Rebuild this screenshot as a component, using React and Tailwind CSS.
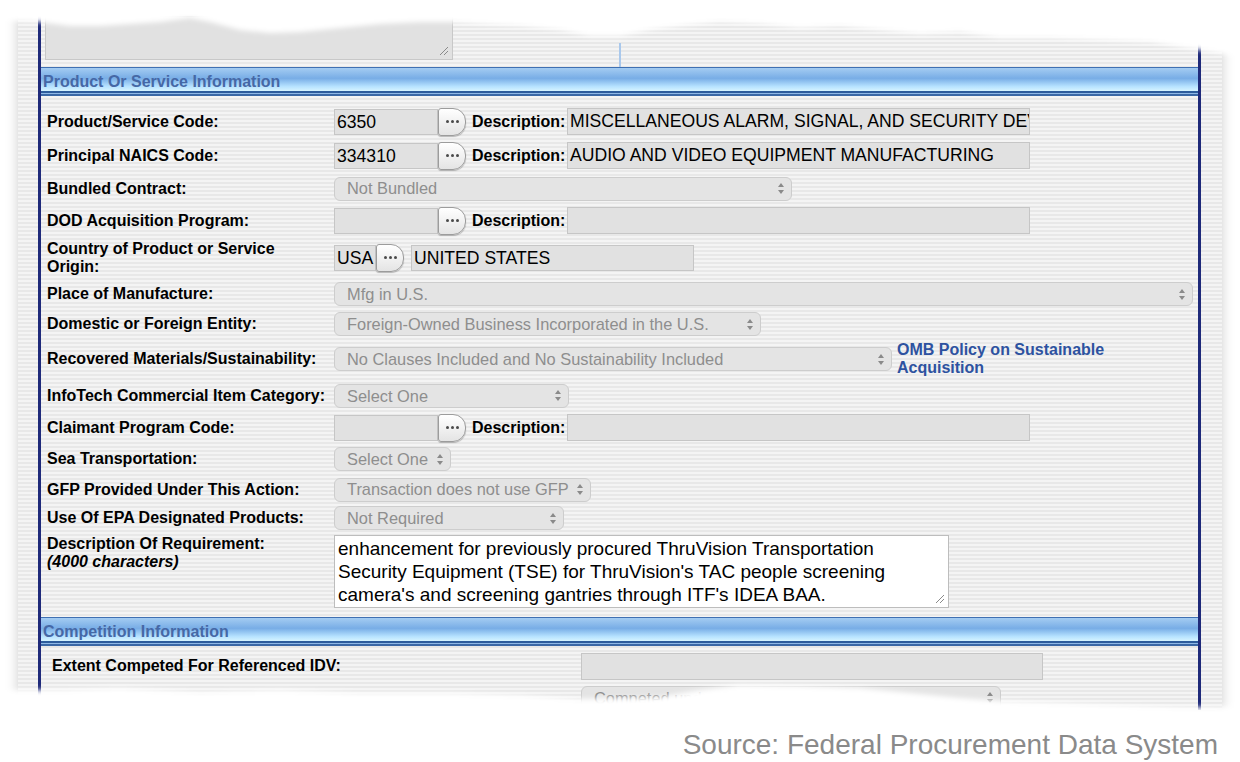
function Dots() {
  return (
    <div className="flex h-[28px] w-[28px] shrink-0 items-center justify-center gap-[2px] rounded-l-[3px] rounded-r-[13px] border border-[#9c9c9c] bg-[linear-gradient(to_bottom,#ffffff,#e4e4e4)] shadow-[0_1px_1px_rgba(0,0,0,0.25)]">
      <span className="h-[3px] w-[3px] rounded-full bg-[#4a4a4a]" />
      <span className="h-[3px] w-[3px] rounded-full bg-[#4a4a4a]" />
      <span className="h-[3px] w-[3px] rounded-full bg-[#4a4a4a]" />
    </div>
  );
}

function Field({ w, value, h = "h-[26px]" }) {
  return (
    <div
      className={`${w} ${h} shrink-0 overflow-hidden whitespace-nowrap border border-[#c6c6c6] bg-[#e1e1e1] px-[2px] text-[17.6px] leading-[24px] text-black`}
    >
      {value}
    </div>
  );
}

function Arrows() {
  return (
    <svg width="8" height="13" viewBox="0 0 8 13" className="shrink-0">
      <path d="M4 1 L7 5 H1 Z" fill="#8a8a8a" />
      <path d="M4 12 L7 8 H1 Z" fill="#8a8a8a" />
    </svg>
  );
}

function Select({ w, value }) {
  return (
    <div
      className={`${w} flex h-[24px] shrink-0 items-center justify-between rounded-[6px] border border-[#cdcdcd] bg-[#e4e4e4] pl-[12px] pr-[6px] text-[16.4px] text-[#8e8e8e]`}
    >
      <span className="whitespace-nowrap">{value}</span>
      <Arrows />
    </div>
  );
}

function Label({ children }) {
  return (
    <div className="w-[293px] shrink-0 pl-[6px] text-[16px] font-bold leading-[18px] text-black">
      {children}
    </div>
  );
}

function Row({ h, label, children }) {
  return (
    <div className={`${h} flex items-center`}>
      <Label>{label}</Label>
      {children}
    </div>
  );
}

function CodeRow({ h, label, code, desc }) {
  return (
    <Row h={h} label={label}>
      <Field w="w-[104px]" value={code} />
      <Dots />
      <span className="ml-[6px] w-[95px] shrink-0 whitespace-nowrap text-[16px] font-bold text-black">Description:</span>
      <Field w="w-[463px]" h="h-[27px]" value={desc} />
    </Row>
  );
}

function Grip() {
  return (
    <svg width="10" height="10" viewBox="0 0 10 10" className="absolute bottom-[3px] right-[3px]">
      <path d="M1 9 L9 1 M5 9 L9 5" stroke="#8a8a8a" strokeWidth="1" />
    </svg>
  );
}

function Header({ title }) {
  return (
    <div className="flex h-[29px] flex-col">
      <div className="h-[24px] border-t border-[#3f70b2] bg-[linear-gradient(to_bottom,#a4ccf2,#78ade6_45%,#b6e2ff_80%,#d6f4ff)] pl-[2px] pt-[4px] text-[16px] font-bold leading-[19px] text-[#4568a6]">
        {title}
      </div>
      <div className="h-[2px] bg-[#2c5c9c]" />
      <div className="h-[1px] bg-[#8fb8e6]" />
      <div className="h-[2px] bg-[#3a68a6]" />
    </div>
  );
}

export default function App() {
  return (
    <div className="relative h-[762px] w-[1240px] overflow-hidden bg-white font-['Liberation_Sans',Arial,sans-serif]">
      <div className="ml-[18px] mt-[8px] h-[702px] w-[1204px] bg-[image:repeating-linear-gradient(to_bottom,#f4f4f4_0px,#f4f4f4_2px,#e8e8e8_2px,#e8e8e8_4px)] pl-[20px] pr-[21px] shadow-[0_0_12px_rgba(0,0,0,0.2)]">
        <div className="flex h-full flex-col border-x-[3px] border-[#1f2a7a]">
          <div className="flex h-[59px]">
            <div className="relative ml-[4px] mt-[8px] h-[44px] w-[408px] border border-[#c8c8c8] bg-[#e1e1e1]">
              <Grip />
            </div>
            <div className="ml-[166px] mt-[35px] h-[24px] w-[2px] bg-[#a9c8ec]" />
          </div>

          <Header title="Product Or Service Information" />
          <div className="h-[9px]" />

          <CodeRow h="h-[34px]" label="Product/Service Code:" code="6350" desc="MISCELLANEOUS ALARM, SIGNAL, AND SECURITY DEVICES" />
          <CodeRow h="h-[34px]" label="Principal NAICS Code:" code="334310" desc="AUDIO AND VIDEO EQUIPMENT MANUFACTURING" />
          <Row h="h-[32px]" label="Bundled Contract:">
            <Select w="w-[458px]" value="Not Bundled" />
          </Row>
          <CodeRow h="h-[32px]" label="DOD Acquisition Program:" code="" desc="" />
          <Row h="h-[43px]" label={<>Country of Product or Service<br />Origin:</>}>
            <Field w="w-[42px]" value="USA" />
            <Dots />
            <div className="ml-[7px]">
              <Field w="w-[283px]" value="UNITED STATES" />
            </div>
          </Row>
          <Row h="h-[30px]" label="Place of Manufacture:">
            <Select w="w-[859px]" value="Mfg in U.S." />
          </Row>
          <Row h="h-[30px]" label="Domestic or Foreign Entity:">
            <Select w="w-[427px]" value="Foreign-Owned Business Incorporated in the U.S." />
          </Row>
          <Row h="h-[40px]" label="Recovered Materials/Sustainability:">
            <Select w="w-[558px]" value="No Clauses Included and No Sustainability Included" />
            <div className="ml-[5px] text-[16px] font-bold leading-[18px] text-[#2d52a0]">
              OMB Policy on Sustainable
              <br />
              Acquisition
            </div>
          </Row>
          <Row h="h-[34px]" label="InfoTech Commercial Item Category:">
            <Select w="w-[235px]" value="Select One" />
          </Row>
          <CodeRow h="h-[30px]" label="Claimant Program Code:" code="" desc="" />
          <Row h="h-[33px]" label="Sea Transportation:">
            <Select w="w-[117px]" value="Select One" />
          </Row>
          <Row h="h-[28px]" label="GFP Provided Under This Action:">
            <Select w="w-[257px]" value="Transaction does not use GFP" />
          </Row>
          <Row h="h-[30px]" label="Use Of EPA Designated Products:">
            <Select w="w-[230px]" value="Not Required" />
          </Row>

          <div className="flex h-[77px] items-start">
            <div className="w-[293px] shrink-0 pl-[6px] pt-[2px] text-[16px] font-bold leading-[18px] text-black">
              Description Of Requirement:
              <br />
              <span className="italic">(4000 characters)</span>
            </div>
            <div className="relative mt-[2px] h-[73px] w-[615px] border border-[#bdbdbd] bg-white pl-[3px] pt-[1px] text-[19px] leading-[23px] text-black">
              enhancement for previously procured ThruVision Transportation
              <br />
              Security Equipment (TSE) for ThruVision's TAC people screening
              <br />
              camera's and screening gantries through ITF's IDEA BAA.
              <Grip />
            </div>
          </div>

          <div className="h-[7px]" />
          <Header title="Competition Information" />

          <div className="flex h-[40px] items-center">
            <div className="w-[540px] shrink-0 pl-[11px] text-[16px] font-bold text-black">
              Extent Competed For Referenced IDV:
            </div>
            <Field w="w-[462px]" h="h-[27px]" value="" />
          </div>
          <div className="flex">
            <div className="w-[540px] shrink-0" />
            <Select w="w-[420px]" value="Competed under SAP" />
          </div>
        </div>
      </div>

      <div className="relative z-10 mt-[19px] h-[32px] pr-[22px] text-right text-[28px] leading-[32px] text-[#8a8a8a]">
        Source: Federal Procurement Data System
      </div>

      <svg className="absolute left-0 top-0" width="1240" height="70" viewBox="0 0 1240 70">
        <defs>
          <filter id="softTop" x="-5%" y="-50%" width="110%" height="200%">
            <feGaussianBlur stdDeviation="2.5" />
          </filter>
        </defs>
        <path
          filter="url(#softTop)"
          fill="#ffffff"
          d="M-10 -10 H1250 V58 L1200 50 L1150 42 L1100 40 L1050 38 L1000 38 L960 32 L920 34 L880 30 L840 26 L800 28 L760 24 L720 22 L680 26 L650 30 L620 36 L590 36 L560 30 L520 26 L480 24 L453 22 L420 22 L380 24 L340 28 L300 32 L270 33 L240 30 L210 22 L190 18 L160 22 L130 24 L100 26 L70 26 L40 22 L-10 20 Z"
        />
      </svg>

      <svg className="absolute left-0 top-[670px]" width="1240" height="56" viewBox="0 670 1240 56">
        <defs>
          <filter id="softBottom" x="-5%" y="-50%" width="110%" height="200%">
            <feGaussianBlur stdDeviation="2.5" />
          </filter>
        </defs>
        <path
          filter="url(#softBottom)"
          fill="#ffffff"
          d="M-10 740 V690 L60 690 L120 688 L200 692 L280 690 L360 693 L450 693 L520 695 L580 699 L660 697 L700 690 L740 685 L800 686 L860 688 L900 692 L960 698 L1000 701 L1060 703 L1120 705 L1180 707 L1250 708 V740 Z"
        />
      </svg>
    </div>
  );
}
